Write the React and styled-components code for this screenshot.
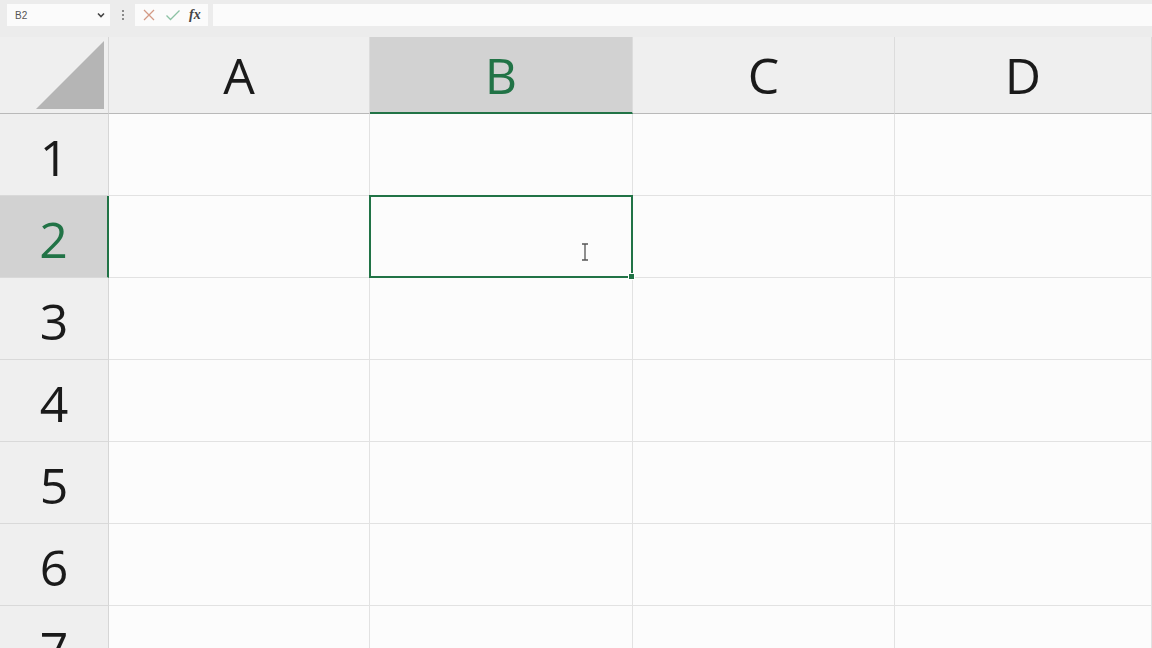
import React from 'react'
import styled, { createGlobalStyle } from 'styled-components'

const Global = createGlobalStyle`
  html, body { margin: 0; padding: 0; background: #ececec; overflow: hidden; }
  body { font-family: 'Open Sans', 'Noto Sans', sans-serif; }
`

const Page = styled.div`
  width: 1152px;
  height: 648px;
  background: #ececec;
  overflow: hidden;
  display: flex;
  flex-direction: column;
`

const FormulaBar = styled.div`
  height: 30px;
  display: flex;
  align-items: center;
  padding: 0 0 0 7px;
  gap: 0;
  flex-shrink: 0;
`

const NameBox = styled.div`
  width: 103px;
  height: 22px;
  background: #fbfbfb;
  display: flex;
  align-items: center;
  justify-content: space-between;
  padding: 0 4px 0 8px;
  box-sizing: border-box;
  font-family: 'Liberation Sans', Arial, sans-serif;
  font-size: 10px;
  color: #555;
`

const Dots = styled.div`
  width: 25px;
  display: flex;
  flex-direction: column;
  align-items: center;
  gap: 2px;
  span { width: 2px; height: 2px; background: #8a8a8a; display: block; }
`

const ButtonsBox = styled.div`
  width: 73px;
  height: 22px;
  background: #fbfbfb;
  display: flex;
  align-items: center;
  justify-content: space-around;
  padding: 0 3px;
  box-sizing: border-box;
`

const Fx = styled.span`
  font-family: 'Liberation Serif', 'Times New Roman', serif;
  font-style: italic;
  font-size: 14px;
  color: #444;
  font-weight: 700;
`

const FormulaInput = styled.div`
  flex: 1;
  height: 22px;
  margin-left: 5px;
  background: #fbfbfb;
`

const Grid = styled.div`
  margin-top: 7px;
  display: grid;
  grid-template-columns: 109px 261px 263px 262px 257px;
  grid-template-rows: 77px repeat(7, 82px);
  background: #fcfcfc;
`

const Corner = styled.div`
  background: #efefef;
  border-bottom: 1px solid #b9b9b9;
  border-right: 1px solid #d6d6d6;
  box-sizing: border-box;
  display: flex;
  align-items: flex-end;
  justify-content: flex-end;
  padding: 0 4px 4px 0;
`

const ColHead = styled.div`
  background: ${p => (p.$active ? '#d2d2d2' : '#efefef')};
  color: ${p => (p.$active ? '#217346' : '#1a1a1a')};
  border-bottom: ${p => (p.$active ? '2px solid #217346' : '1px solid #b9b9b9')};
  border-right: 1px solid #dcdcdc;
  box-sizing: border-box;
  display: flex;
  align-items: center;
  justify-content: center;
  font-size: 50px;
  padding-top: ${p => (p.$active ? '1px' : '0')};
`

const RowHead = styled.div`
  background: ${p => (p.$active ? '#d2d2d2' : '#efefef')};
  color: ${p => (p.$active ? '#217346' : '#1a1a1a')};
  border-right: ${p => (p.$active ? '2px solid #217346' : '1px solid #d6d6d6')};
  border-bottom: 1px solid #d9d9d9;
  box-sizing: border-box;
  display: flex;
  align-items: center;
  justify-content: center;
  font-size: 50px;
  padding-top: 4px;
`

const Cell = styled.div`
  position: relative;
  border-right: 1px solid #e2e2e2;
  border-bottom: 1px solid #e2e2e2;
  box-sizing: border-box;
  background: #fcfcfc;
`

const Selection = styled.div`
  position: absolute;
  left: -1px;
  top: -1px;
  right: -1px;
  bottom: -1px;
  border: 2px solid #217346;
  z-index: 2;
`

const Handle = styled.div`
  position: absolute;
  right: -4px;
  bottom: -4px;
  width: 5px;
  height: 5px;
  background: #217346;
  border: 1px solid #fff;
`

const Cursor = styled.svg`
  position: absolute;
  left: 210px;
  top: 46px;
  z-index: 3;
`

const cols = ['A', 'B', 'C', 'D']
const rows = [1, 2, 3, 4, 5, 6, 7]

export default function App() {
  return (
    <Page>
      <Global />
      <FormulaBar>
        <NameBox>
          <span>B2</span>
          <svg width="10" height="8" viewBox="0 0 10 8">
            <path d="M2 2.5 L5 5.5 L8 2.5" fill="none" stroke="#444" strokeWidth="1.6" />
          </svg>
        </NameBox>
        <Dots><span /><span /><span /></Dots>
        <ButtonsBox>
          <svg width="14" height="14" viewBox="0 0 14 14">
            <path d="M2 2 L12 12 M12 2 L2 12" stroke="#d39a85" strokeWidth="1.3" />
          </svg>
          <svg width="16" height="14" viewBox="0 0 16 14">
            <path d="M1.5 7.5 L5.5 11.5 L14.5 2.5" fill="none" stroke="#8cc2a4" strokeWidth="1.3" />
          </svg>
          <Fx>fx</Fx>
        </ButtonsBox>
        <FormulaInput />
      </FormulaBar>

      <Grid>
        <Corner>
          <svg width="68" height="68" viewBox="0 0 68 68">
            <polygon points="68,0 68,68 0,68" fill="#b5b5b5" />
          </svg>
        </Corner>
        {cols.map(c => (
          <ColHead key={c} $active={c === 'B'}>{c}</ColHead>
        ))}
        {rows.map(r => (
          <React.Fragment key={r}>
            <RowHead $active={r === 2}>{r}</RowHead>
            {cols.map(c => (
              <Cell key={c}>
                {r === 2 && c === 'B' && (
                  <Selection>
                    <Handle />
                    <Cursor width="8" height="18" viewBox="0 0 8 18">
                      <path d="M1 1 H7 M4 1 V17 M1 17 H7" stroke="#555" strokeWidth="1.3" fill="none" />
                    </Cursor>
                  </Selection>
                )}
              </Cell>
            ))}
          </React.Fragment>
        ))}
      </Grid>
    </Page>
  )
}
